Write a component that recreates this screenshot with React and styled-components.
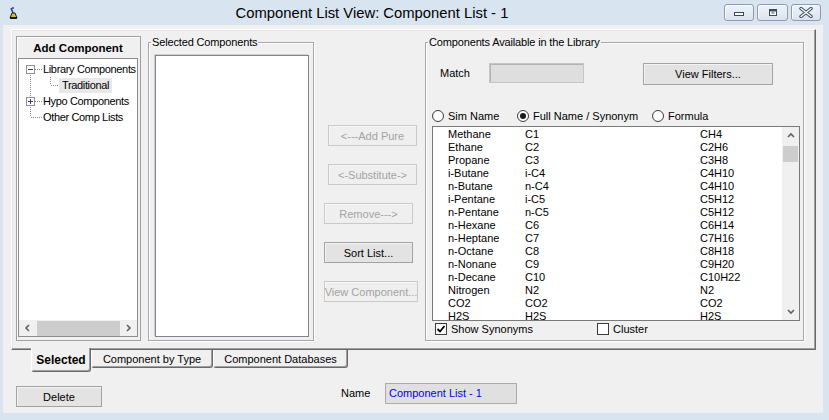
import React from 'react';
import styled, { createGlobalStyle } from 'styled-components';

const GlobalStyle = createGlobalStyle`
  html, body {
    margin: 0;
    padding: 0;
  }
  body {
    width: 829px;
    height: 420px;
    overflow: hidden;
    background: #d9e4f1;
    font-family: "Liberation Sans", Arial, sans-serif;
    font-size: 11px;
    color: #000;
  }
  * { box-sizing: border-box; }
`;

const Window = styled.div`
  width: 829px;
  height: 420px;
  display: flex;
  flex-direction: column;
  background: #d9e4f1;
`;

const TitleBar = styled.div`
  height: 25px;
  flex-shrink: 0;
  display: flex;
  align-items: center;
`;

const AppIcon = styled.svg`
  margin-left: 8px;
  width: 12px;
  height: 14px;
  flex-shrink: 0;
`;

const Title = styled.div`
  flex: 1;
  text-align: center;
  font-size: 14.8px;
  line-height: 18px;
  padding-top: 1px;
`;

const CaptionButtons = styled.div`
  align-self: flex-start;
  margin-top: 4px;
  margin-right: 8px;
  display: flex;
  gap: 3px;
`;

const CaptionButton = styled.div`
  width: ${p => p.$w}px;
  height: 17px;
  border: 1px solid #8d9ab0;
  border-radius: 3px;
  background: linear-gradient(#eef3fa, #dae3ef);
  box-shadow: inset 1px 1px 0 #f8fbff;
  display: flex;
  align-items: center;
  justify-content: center;
`;

const Client = styled.div`
  flex: 1;
  margin: 0 6px 7px 3px;
  background: #f0f0f0;
  display: flex;
  flex-direction: column;
  padding: 4px 0 0 8px;
`;

const TabPage = styled.div`
  width: 805px;
  height: 321px;
  border: 1px solid;
  border-color: #ffffff #696969 #696969 #ffffff;
  box-shadow: inset -1px -1px 0 #a0a0a0, inset 1px 1px 0 #e3e3e3;
  padding: 6px 0 0 4px;
  display: flex;
  align-items: flex-start;
`;

const TreePanel = styled.div`
  width: 125px;
  height: 305px;
  border: 1px solid #a0a0a0;
  box-shadow: inset 1px 1px 0 #ffffff;
  padding: 0 2px 3px 1px;
  display: flex;
  flex-direction: column;
`;

const TreeHeader = styled.div`
  height: 21px;
  font-weight: bold;
  font-size: 11.5px;
  line-height: 22px;
  text-align: center;
`;

const TreeBox = styled.div`
  flex: 1;
  background: #fff;
  border: 1px solid #8c8c8c;
  display: flex;
  flex-direction: column;
  padding-top: 2px;
  overflow: hidden;
`;

const TreeRow = styled.div`
  height: 16px;
  display: flex;
  align-items: center;
  & > svg { flex-shrink: 0; }
`;

const TreeLabel = styled.span`
  line-height: 15px;
  letter-spacing: -0.35px;
  padding: 0 3px 0 ${p => (p.$selected ? 3 : 0)}px;
  background: ${p => (p.$selected ? '#e8e8e8' : 'transparent')};
  white-space: nowrap;
`;

const Spacer = styled.div`
  flex: 1;
`;

const HScroll = styled.div`
  height: 16px;
  background: #f0f0f0;
  display: flex;
  align-items: center;
`;

const ArrowCell = styled.div`
  width: ${p => p.$w || 17}px;
  height: ${p => p.$h || 16}px;
  display: flex;
  align-items: center;
  justify-content: center;
  flex-shrink: 0;
`;

const HThumb = styled.div`
  width: 83px;
  height: 15px;
  background: #cdcdcd;
`;

const Group = styled.fieldset`
  margin: 0 0 0 ${p => p.$ml || 0}px;
  padding: 0;
  min-width: 0;
  width: ${p => p.$w}px;
  height: 305px;
  border: 1px solid #a8a8a8;
  box-shadow: 1px 1px 0 #ffffff, inset 1px 1px 0 #ffffff;
  display: flex;
  flex-direction: column;
`;

const Legend = styled.legend`
  margin-left: 2px;
  padding: 0 1px;
  line-height: 13px;
  font-size: 11px;
  letter-spacing: -0.15px;
`;

const SelectedList = styled.div`
  margin: 6px 0 0 6px;
  width: 154px;
  height: 282px;
  background: #fff;
  border: 1px solid #828290;
  box-shadow: -1px -1px 0 #d0d0d0;
`;

const ButtonColumn = styled.div`
  width: 111px;
  padding-top: 89px;
  display: flex;
  flex-direction: column;
  gap: 18px;
`;

const Button = styled.div`
  width: ${p => p.$w}px;
  height: ${p => p.$h || 21}px;
  margin-left: ${p => p.$ml || 0}px;
  border: 1px solid ${p => (p.$disabled ? '#c9c9c9' : '#a3a3a3')};
  background: ${p => (p.$disabled ? '#efefef' : '#e3e3e3')};
  box-shadow: inset 1px 1px 0 ${p => (p.$disabled ? '#f7f7f7' : '#f3f3f3')};
  color: ${p => (p.$disabled ? '#a3a3a3' : '#000')};
  font-size: 11px;
  display: flex;
  align-items: center;
  justify-content: center;
  white-space: nowrap;
  flex-shrink: 0;
`;

const MatchRow = styled.div`
  margin-top: 14px;
  height: 22px;
  display: flex;
  align-items: flex-start;
  padding-left: 14px;
`;

const FieldLabel = styled.div`
  width: ${p => p.$w}px;
  line-height: ${p => p.$lh || 20}px;
  margin-left: ${p => p.$ml || 0}px;
`;

const MatchField = styled.div`
  width: 95px;
  height: 20px;
  background: #dedede;
  border: 1px solid #c6c6c6;
  box-shadow: inset 1px 1px 0 #b4b4b4;
  margin-right: 59px;
`;

const RadioRow = styled.div`
  margin-top: 24px;
  height: 14px;
  display: flex;
  align-items: center;
  padding-left: 6px;
`;

const RadioItem = styled.label`
  display: flex;
  align-items: center;
  gap: 4px;
  width: ${p => p.$w}px;
`;

const RadioCircle = styled.span`
  width: 12px;
  height: 12px;
  border-radius: 50%;
  border: 1px solid #3c3c3c;
  background: #fff;
  display: flex;
  align-items: center;
  justify-content: center;
  &::after {
    content: '';
    width: 6px;
    height: 6px;
    border-radius: 50%;
    background: ${p => (p.$checked ? '#1a1a1a' : 'transparent')};
  }
`;

const ListBox = styled.div`
  margin: 3px 0 0 6px;
  width: 368px;
  height: 195px;
  background: #fff;
  border: 1px solid #7a7a7a;
  display: flex;
  overflow: hidden;
`;

const Rows = styled.div`
  flex: 1;
  padding: 1px 0 0 15px;
`;

const Row = styled.div`
  display: grid;
  grid-template-columns: 77px 175px 1fr;
  height: 13px;
  line-height: 13px;
  white-space: nowrap;
`;

const VScroll = styled.div`
  width: 17px;
  background: #f0f0f0;
  display: flex;
  flex-direction: column;
  align-items: center;
`;

const VThumb = styled.div`
  width: 15px;
  height: 16px;
  background: #cdcdcd;
  margin-top: 1px;
`;

const CheckRow = styled.div`
  margin-top: 2px;
  height: 12px;
  display: flex;
  align-items: center;
  padding-left: 9px;
`;

const CheckItem = styled.label`
  display: flex;
  align-items: center;
  gap: 4px;
  width: ${p => p.$w}px;
`;

const CheckBox = styled.span`
  width: 12px;
  height: 12px;
  border: 1px solid #3c3c3c;
  background: #fff;
  display: flex;
  align-items: center;
  justify-content: center;
`;

const TabStrip = styled.div`
  display: flex;
  align-items: flex-start;
  padding-left: 20px;
  height: 22px;
`;

const Tab = styled.div`
  width: ${p => p.$w}px;
  height: ${p => (p.$active ? 24 : 18)}px;
  margin-top: ${p => (p.$active ? -2 : 0)}px;
  background: #f0f0f0;
  border: 1px solid;
  border-top: none;
  border-color: #ffffff #696969 #696969 #ffffff;
  border-radius: 0 0 3px 3px;
  box-shadow: inset -1px -1px 0 #a0a0a0;
  font-weight: ${p => (p.$active ? 'bold' : 'normal')};
  font-size: ${p => (p.$active ? '12px' : '11px')};
  display: flex;
  align-items: center;
  justify-content: center;
  padding-top: ${p => (p.$active ? 1 : 0)}px;
  position: relative;
  z-index: ${p => (p.$active ? 1 : 0)};
`;

const BottomBar = styled.div`
  margin-top: 11px;
  padding-left: 5px;
  display: flex;
  align-items: flex-start;
`;

const NameField = styled.div`
  width: 132px;
  height: 21px;
  background: #e0e0e0;
  border: 1px solid #ababab;
  color: #0000ff;
  line-height: 19px;
  padding-left: 3px;
`;

const Chevron = ({ dir }) => {
  const pts = {
    left: '5,1 2,4 5,7',
    right: '2,1 5,4 2,7',
    up: '1,5 4,2 7,5',
    down: '1,2 4,5 7,2',
  }[dir];
  return (
    <svg width="8" height="8" viewBox="0 0 8 8">
      <polyline points={pts} fill="none" stroke="#606060" strokeWidth="1.6" />
    </svg>
  );
};

const TreeGutter = ({ kind }) => {
  const dot = { stroke: '#8a8a8a', strokeWidth: 1, strokeDasharray: '1 1' };
  if (kind === 'minus' || kind === 'plus') {
    return (
      <svg width="24" height="16" viewBox="0 0 24 16">
        {kind === 'plus' && <line x1="11.5" y1="0" x2="11.5" y2="4" {...dot} />}
        <line x1="11.5" y1="12" x2="11.5" y2="16" {...dot} />
        <line x1="16" y1="8.5" x2="23" y2="8.5" {...dot} />
        <rect x="7.5" y="4.5" width="8" height="8" fill="#fff" stroke="#919191" />
        <line x1="9" y1="8.5" x2="14" y2="8.5" stroke="#2d3f8f" />
        {kind === 'plus' && <line x1="11.5" y1="6" x2="11.5" y2="11" stroke="#2d3f8f" />}
      </svg>
    );
  }
  if (kind === 'child') {
    return (
      <svg width="40" height="16" viewBox="0 0 40 16">
        <line x1="11.5" y1="0" x2="11.5" y2="16" {...dot} />
        <line x1="31.5" y1="0" x2="31.5" y2="8" {...dot} />
        <line x1="32" y1="8.5" x2="40" y2="8.5" {...dot} />
      </svg>
    );
  }
  return (
    <svg width="24" height="16" viewBox="0 0 24 16">
      <line x1="11.5" y1="0" x2="11.5" y2="8" {...dot} />
      <line x1="12" y1="8.5" x2="23" y2="8.5" {...dot} />
    </svg>
  );
};

const components = [
  ['Methane', 'C1', 'CH4'],
  ['Ethane', 'C2', 'C2H6'],
  ['Propane', 'C3', 'C3H8'],
  ['i-Butane', 'i-C4', 'C4H10'],
  ['n-Butane', 'n-C4', 'C4H10'],
  ['i-Pentane', 'i-C5', 'C5H12'],
  ['n-Pentane', 'n-C5', 'C5H12'],
  ['n-Hexane', 'C6', 'C6H14'],
  ['n-Heptane', 'C7', 'C7H16'],
  ['n-Octane', 'C8', 'C8H18'],
  ['n-Nonane', 'C9', 'C9H20'],
  ['n-Decane', 'C10', 'C10H22'],
  ['Nitrogen', 'N2', 'N2'],
  ['CO2', 'CO2', 'CO2'],
  ['H2S', 'H2S', 'H2S'],
];

const App = () => {
  return (
    <>
      <GlobalStyle />
      <Window>
        <TitleBar>
          <AppIcon viewBox="0 0 12 14">
            <line x1="3" y1="2" x2="5" y2="7" stroke="#1e3c9c" strokeWidth="1.5" />
            <rect x="4" y="1" width="2" height="2" fill="#4a6ad8" />
            <path d="M2 12 L4 7 L7 7 L9 12 Z" fill="#d8c020" stroke="#1a1a1a" strokeWidth="1" />
            <rect x="2" y="11" width="7" height="2" fill="#1a1a1a" />
          </AppIcon>
          <Title>Component List View: Component List - 1</Title>
          <CaptionButtons>
            <CaptionButton $w={30}>
              <svg width="12" height="8" viewBox="0 0 12 8">
                <rect x="1.5" y="3.5" width="9" height="3" fill="#fff" stroke="#3b4a63" />
              </svg>
            </CaptionButton>
            <CaptionButton $w={31}>
              <svg width="10" height="9" viewBox="0 0 10 9">
                <rect x="1.5" y="1.5" width="7" height="6" fill="#fff" stroke="#3b4a63" />
                <rect x="1.5" y="1.5" width="7" height="2" fill="#3b4a63" />
                <rect x="3.5" y="4.5" width="3" height="1" fill="#3b4a63" />
              </svg>
            </CaptionButton>
            <CaptionButton $w={30}>
              <svg width="14" height="11" viewBox="0 0 14 11">
                <path d="M2 1.5 L12 9.5 M12 1.5 L2 9.5" stroke="#3b4a63" strokeWidth="3.4" strokeLinecap="round" />
                <path d="M2 1.5 L12 9.5 M12 1.5 L2 9.5" stroke="#ffffff" strokeWidth="1.4" strokeLinecap="round" />
              </svg>
            </CaptionButton>
          </CaptionButtons>
        </TitleBar>

        <Client>
          <TabPage>
            <TreePanel>
              <TreeHeader>Add Component</TreeHeader>
              <TreeBox>
                <TreeRow>
                  <TreeGutter kind="minus" />
                  <TreeLabel>Library Components</TreeLabel>
                </TreeRow>
                <TreeRow>
                  <TreeGutter kind="child" />
                  <TreeLabel $selected>Traditional</TreeLabel>
                </TreeRow>
                <TreeRow>
                  <TreeGutter kind="plus" />
                  <TreeLabel>Hypo Components</TreeLabel>
                </TreeRow>
                <TreeRow>
                  <TreeGutter kind="last" />
                  <TreeLabel>Other Comp Lists</TreeLabel>
                </TreeRow>
                <Spacer />
                <HScroll>
                  <ArrowCell $w={18}><Chevron dir="left" /></ArrowCell>
                  <HThumb />
                  <ArrowCell $w={17}><Chevron dir="right" /></ArrowCell>
                </HScroll>
              </TreeBox>
            </TreePanel>

            <Group $w={166} $ml={7}>
              <Legend>Selected Components</Legend>
              <SelectedList />
            </Group>

            <ButtonColumn>
              <Button $w={89} $ml={14} $disabled>&lt;---Add Pure</Button>
              <Button $w={89} $ml={14} $disabled>&lt;-Substitute-&gt;</Button>
              <Button $w={89} $ml={10} $disabled>Remove---&gt;</Button>
              <Button $w={89} $ml={10}>Sort List...</Button>
              <Button $w={94} $ml={10} $disabled>View Component...</Button>
            </ButtonColumn>

            <Group $w={379}>
              <Legend>Components Available in the Library</Legend>
              <MatchRow>
                <FieldLabel $w={49}>Match</FieldLabel>
                <MatchField />
                <Button $w={130} $h={22}>View Filters...</Button>
              </MatchRow>
              <RadioRow>
                <RadioItem $w={85}>
                  <RadioCircle />
                  Sim Name
                </RadioItem>
                <RadioItem $w={135}>
                  <RadioCircle $checked />
                  Full Name / Synonym
                </RadioItem>
                <RadioItem $w={80}>
                  <RadioCircle />
                  Formula
                </RadioItem>
              </RadioRow>
              <ListBox>
                <Rows>
                  {components.map(([name, syn, formula]) => (
                    <Row key={name}>
                      <span>{name}</span>
                      <span>{syn}</span>
                      <span>{formula}</span>
                    </Row>
                  ))}
                </Rows>
                <VScroll>
                  <ArrowCell $w={17} $h={18}><Chevron dir="up" /></ArrowCell>
                  <VThumb />
                  <Spacer />
                  <ArrowCell $w={17} $h={17}><Chevron dir="down" /></ArrowCell>
                </VScroll>
              </ListBox>
              <CheckRow>
                <CheckItem $w={162}>
                  <CheckBox>
                    <svg width="10" height="10" viewBox="0 0 10 10">
                      <polyline points="1.5,5 4,7.5 8.5,2" fill="none" stroke="#000" strokeWidth="1.8" />
                    </svg>
                  </CheckBox>
                  Show Synonyms
                </CheckItem>
                <CheckItem $w={80}>
                  <CheckBox />
                  Cluster
                </CheckItem>
              </CheckRow>
            </Group>
          </TabPage>

          <TabStrip>
            <Tab $w={60} $active>Selected</Tab>
            <Tab $w={122}>Component by Type</Tab>
            <Tab $w={135}>Component Databases</Tab>
          </TabStrip>

          <BottomBar>
            <Button $w={86} style={{ marginTop: 3 }}>Delete</Button>
            <FieldLabel $w={44} $ml={239} $lh={21}>Name</FieldLabel>
            <NameField>Component List - 1</NameField>
          </BottomBar>
        </Client>
      </Window>
    </>
  );
};

export default App;
